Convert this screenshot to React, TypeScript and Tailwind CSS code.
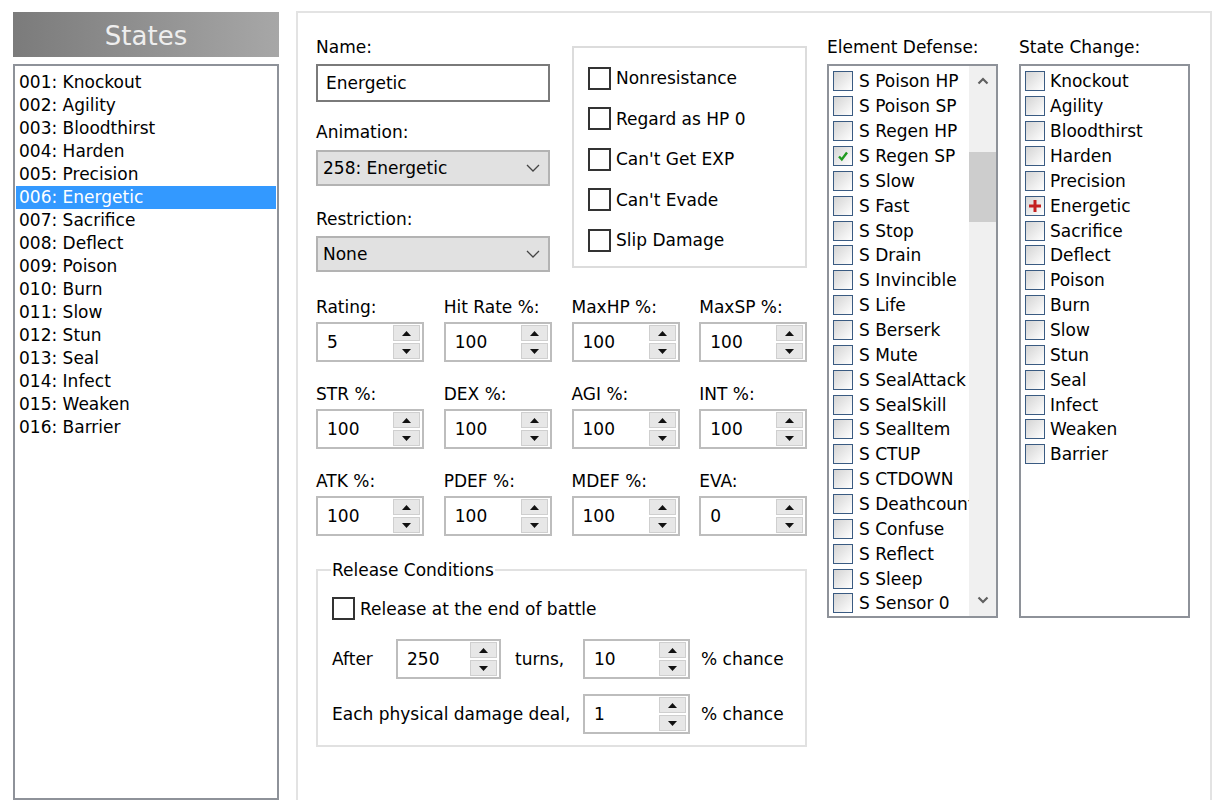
const states = [
  "Knockout",
  "Agility",
  "Bloodthirst",
  "Harden",
  "Precision",
  "Energetic",
  "Sacrifice",
  "Deflect",
  "Poison",
  "Burn",
  "Slow",
  "Stun",
  "Seal",
  "Infect",
  "Weaken",
  "Barrier",
];

const elements = [
  "S Poison HP",
  "S Poison SP",
  "S Regen HP",
  "S Regen SP",
  "S Slow",
  "S Fast",
  "S Stop",
  "S Drain",
  "S Invincible",
  "S Life",
  "S Berserk",
  "S Mute",
  "S SealAttack",
  "S SealSkill",
  "S SealItem",
  "S CTUP",
  "S CTDOWN",
  "S Deathcount",
  "S Confuse",
  "S Reflect",
  "S Sleep",
  "S Sensor 0",
];

const stats = [
  ["Rating:", "5"],
  ["Hit Rate %:", "100"],
  ["MaxHP %:", "100"],
  ["MaxSP %:", "100"],
  ["STR %:", "100"],
  ["DEX %:", "100"],
  ["AGI %:", "100"],
  ["INT %:", "100"],
  ["ATK %:", "100"],
  ["PDEF %:", "100"],
  ["MDEF %:", "100"],
  ["EVA:", "0"],
];

const flags = ["Nonresistance", "Regard as HP 0", "Can't Get EXP", "Can't Evade", "Slip Damage"];

function Box() {
  return <span className="h-[23px] w-[23px] shrink-0 border-2 border-[#333333] bg-white" />;
}

function ListCheck({ mark }: { mark?: "check" | "cross" }) {
  return (
    <span className="flex h-[20px] w-[20px] shrink-0 items-center justify-center border-[1.5px] border-[#3a5b82] bg-linear-to-br from-[#d4d4d4] to-white">
      {mark === "check" && (
        <svg width="14" height="14" viewBox="0 0 14 14">
          <path d="M3 7.5 L5.8 10.5 L11 3.5" fill="none" stroke="#1f9a1f" strokeWidth="2.4" />
        </svg>
      )}
      {mark === "cross" && (
        <svg width="14" height="14" viewBox="0 0 14 14">
          <rect x="5.5" y="1" width="3" height="12" fill="#c42121" />
          <rect x="1" y="5.5" width="12" height="3" fill="#c42121" />
        </svg>
      )}
    </span>
  );
}

function Tri({ up }: { up?: boolean }) {
  return (
    <svg width="9" height="5" viewBox="0 0 9 5">
      <polygon points={up ? "0,5 9,5 4.5,0" : "0,0 9,0 4.5,5"} fill="#111111" />
    </svg>
  );
}

function Spin({ value, width }: { value: string; width: string }) {
  return (
    <div className={`flex h-[40px] items-center border-2 border-[#bdbdbd] bg-white py-[1px] pr-[2px] ${width}`}>
      <span className="flex-1 pl-[9px]">{value}</span>
      <div className="flex w-[27px] flex-col gap-[2px]">
        <span className="flex h-[16px] items-center justify-center border border-[#cfcfcf] bg-[#e7e7e7]">
          <Tri up />
        </span>
        <span className="flex h-[16px] items-center justify-center border border-[#cfcfcf] bg-[#e7e7e7]">
          <Tri />
        </span>
      </div>
    </div>
  );
}

function Select({ value }: { value: string }) {
  return (
    <div className="flex h-[36px] items-center justify-between border-2 border-[#b3b3b3] bg-[#e1e1e1] pl-[5px] pr-[8px]">
      <span>{value}</span>
      <svg width="14" height="8" viewBox="0 0 14 8">
        <path d="M1 1 L7 7 L13 1" fill="none" stroke="#444444" strokeWidth="1.3" />
      </svg>
    </div>
  );
}

export default function App() {
  return (
    <div className="flex h-[800px] w-[1215px] overflow-hidden bg-white font-['DejaVu_Sans',sans-serif] text-[17px] leading-[20px] text-black">
      {/* database list */}
      <div className="ml-[13px] mt-[12px] flex w-[266px] flex-col">
        <div className="flex h-[46px] items-center justify-center bg-linear-to-r from-[#7b7b7b] to-[#a7a7a7] pt-[3px] text-[26px] text-[#eeeeee]">
          States
        </div>
        <div className="mt-[7px] h-[760px] border-2 border-[#8e9299] pt-[5px]">
          {states.map((s, i) => (
            <div
              key={s}
              className={`mx-[1px] flex h-[23px] items-center pl-[3px] ${i === 5 ? "bg-[#3399ff] text-white" : ""}`}
            >
              {String(i + 1).padStart(3, "0")}: {s}
            </div>
          ))}
        </div>
      </div>

      {/* editor */}
      <div className="ml-[17px] mt-[11px] flex h-[800px] w-[916px] border-2 border-[#e3e3e3] pl-[18px] pt-[24px]">
        <div className="flex w-[491px] flex-col">
          <div className="flex justify-between">
            <div className="flex w-[234px] flex-col">
              <span>Name:</span>
              <div className="mt-[7px] flex h-[38px] items-center border-2 border-[#7a7a7a] pl-[8px]">Energetic</div>
              <span className="mt-[20px]">Animation:</span>
              <div className="mt-[8px]">
                <Select value="258: Energetic" />
              </div>
              <span className="mt-[23px]">Restriction:</span>
              <div className="mt-[7px]">
                <Select value="None" />
              </div>
            </div>
            <div className="mt-[9px] flex h-[222px] w-[235px] flex-col border-2 border-[#dcdcdc] pl-[14px] pt-[10px]">
              {flags.map((f) => (
                <label key={f} className="flex h-[40.5px] items-center gap-[5px]">
                  <Box />
                  {f}
                </label>
              ))}
            </div>
          </div>

          <div className="mt-[25px] grid grid-cols-4 gap-x-[20px] gap-y-[22px]">
            {stats.map(([label, value]) => (
              <div key={label} className="flex flex-col">
                <span>{label}</span>
                <div className="mt-[5px]">
                  <Spin value={value} width="w-[108px]" />
                </div>
              </div>
            ))}
          </div>

          <fieldset className="mt-[24px] w-[491px] border-2 border-[#e1e1e1] pb-[11px] pl-[14px]">
            <legend className="-ml-[1px] px-[1px]">Release Conditions</legend>
            <label className="mt-[17px] flex items-center gap-[5px]">
              <Box />
              Release at the end of battle
            </label>
            <div className="mt-[19px] flex items-center">
              <span className="w-[64px]">After</span>
              <Spin value="250" width="w-[105px]" />
              <span className="w-[82px] pl-[14px]">turns,</span>
              <Spin value="10" width="w-[107px]" />
              <span className="pl-[11px]">% chance</span>
            </div>
            <div className="mt-[15px] flex items-center">
              <span className="w-[251px]">Each physical damage deal,</span>
              <Spin value="1" width="w-[107px]" />
              <span className="pl-[11px]">% chance</span>
            </div>
          </fieldset>
        </div>

        {/* element defense */}
        <div className="ml-[20px] flex w-[171px] flex-col">
          <span>Element Defense:</span>
          <div className="mt-[7px] flex h-[554px] border-2 border-[#8e9299]">
            <div className="flex-1 overflow-hidden pl-[4px] pt-[3px]">
              {elements.map((e, i) => (
                <div key={e} className="flex h-[24.86px] items-center gap-[6px] whitespace-nowrap">
                  <ListCheck mark={i === 3 ? "check" : undefined} />
                  {e}
                </div>
              ))}
            </div>
            <div className="flex w-[27px] flex-col bg-[#f0f0f0]">
              <div className="flex h-[30px] items-center justify-center">
                <svg width="12" height="8" viewBox="0 0 12 8">
                  <path d="M1.5 6.5 L6 2 L10.5 6.5" fill="none" stroke="#606060" strokeWidth="2.2" />
                </svg>
              </div>
              <div className="mt-[56px] h-[70px] bg-[#cdcdcd]" />
              <div className="flex-1" />
              <div className="flex h-[32px] items-center justify-center">
                <svg width="12" height="8" viewBox="0 0 12 8">
                  <path d="M1.5 1.5 L6 6 L10.5 1.5" fill="none" stroke="#606060" strokeWidth="2.2" />
                </svg>
              </div>
            </div>
          </div>
        </div>

        {/* state change */}
        <div className="ml-[21px] flex w-[171px] flex-col">
          <span>State Change:</span>
          <div className="mt-[7px] h-[554px] border-2 border-[#8e9299] pl-[4px] pt-[3px]">
            {states.map((s, i) => (
              <div key={s} className="flex h-[24.86px] items-center gap-[5px] whitespace-nowrap">
                <ListCheck mark={i === 5 ? "cross" : undefined} />
                {s}
              </div>
            ))}
          </div>
        </div>
      </div>
    </div>
  );
}
